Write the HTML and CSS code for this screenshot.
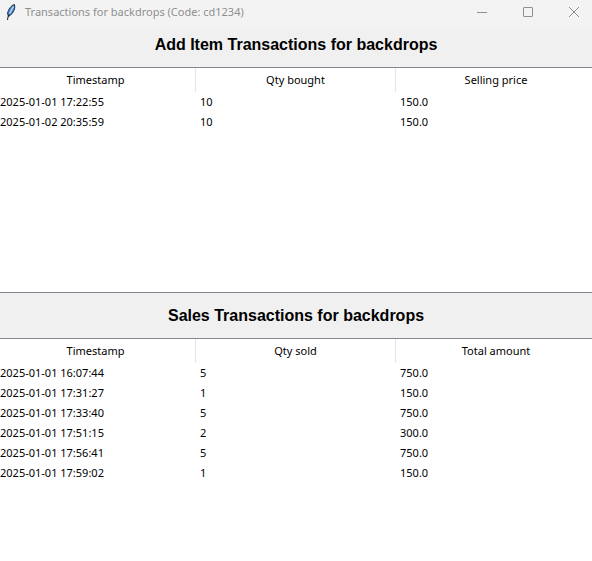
FILE: index.html
```
<!DOCTYPE html>
<html lang="en">
<head>
<meta charset="utf-8">
<title>Transactions for backdrops (Code: cd1234)</title>
<link rel="stylesheet" href="styles.css">
</head>
<body>
<header class="titlebar">
  <svg class="feather" viewBox="0 0 12 18" aria-hidden="true">
    <path d="M9.500 1.500C6 2.500 3.500 6 2.500 10.500L3.500 13.500C7 11.500 9 8.500 9.800 4.500Z" fill="#3f7fd0" stroke="#2a303c" stroke-width="1"/>
    <path d="M8.500 3.500L4.500 10.500" stroke="#a9cdf5" stroke-width="1.600"/>
    <path d="M4 11.500L3 14L2.500 17" fill="none" stroke="#151b26" stroke-width="1"/>
  </svg>
  <span class="caption">Transactions for backdrops (Code: cd1234)</span>
  <div class="controls">
    <button type="button" class="control" aria-label="Minimize"><svg viewBox="0 0 12 12"><path d="M1 6.5H11"/></svg></button>
    <button type="button" class="control" aria-label="Maximize"><svg viewBox="0 0 12 12"><rect x="1.5" y="1.5" width="9" height="9" rx="0.5"/></svg></button>
    <button type="button" class="control" aria-label="Close"><svg viewBox="0 0 12 12"><path d="M1 1L11 11M11 1L1 11"/></svg></button>
  </div>
</header>
<main class="content">
  <h2 class="heading heading-first" id="added">Add Item Transactions for backdrops</h2>
  <section class="tree">
    <table aria-labelledby="added">
      <colgroup><col class="col-time"><col class="col-qty"><col></colgroup>
      <thead><tr><th>Timestamp</th><th>Qty bought</th><th>Selling price</th></tr></thead>
      <tbody>
        <tr><td>2025-01-01 17:22:55</td><td>10</td><td>150.0</td></tr>
        <tr><td>2025-01-02 20:35:59</td><td>10</td><td>150.0</td></tr>
      </tbody>
    </table>
  </section>
  <h2 class="heading" id="sales">Sales Transactions for backdrops</h2>
  <section class="tree">
    <table aria-labelledby="sales">
      <colgroup><col class="col-time"><col class="col-qty"><col></colgroup>
      <thead><tr><th>Timestamp</th><th>Qty sold</th><th>Total amount</th></tr></thead>
      <tbody>
        <tr><td>2025-01-01 16:07:44</td><td>5</td><td>750.0</td></tr>
        <tr><td>2025-01-01 17:31:27</td><td>1</td><td>150.0</td></tr>
        <tr><td>2025-01-01 17:33:40</td><td>5</td><td>750.0</td></tr>
        <tr><td>2025-01-01 17:51:15</td><td>2</td><td>300.0</td></tr>
        <tr><td>2025-01-01 17:56:41</td><td>5</td><td>750.0</td></tr>
        <tr><td>2025-01-01 17:59:02</td><td>1</td><td>150.0</td></tr>
      </tbody>
    </table>
  </section>
</main>
</body>
</html>
```
FILE: styles.css
```
* {
  box-sizing: border-box;
}

body {
  margin: 0;
  background: #f0f0f0;
  color: #000;
  font-family: "Noto Sans", "Open Sans", sans-serif;
  font-size: 11px;
  overflow: hidden;
}

.titlebar {
  display: flex;
  align-items: center;
  height: 27px;
  padding: 0 0 4px 5px;
  background: #f3f3f3;
  color: #8f8f8f;
}

.feather {
  width: 12px;
  height: 18px;
  margin-right: 8px;
}

.caption {
  flex: 1;
  line-height: 20px;
  white-space: nowrap;
}

.controls {
  display: flex;
  margin-right: -5px;
}

.control {
  display: flex;
  align-items: center;
  justify-content: center;
  width: 46px;
  height: 22px;
  padding: 0;
  border: 0;
  background: none;
  color: inherit;
}

.control svg {
  width: 12px;
  height: 12px;
  fill: none;
  stroke: currentColor;
}

.heading {
  margin: 0;
  padding: 13px 0 12px;
  font: bold 16px/20px "Liberation Sans", Arial, sans-serif;
  text-align: center;
}

.heading-first {
  padding-top: 8px;
}

.tree {
  min-height: 226px;
  border: solid #828790;
  border-width: 1px 0;
  background: #fff;
}

table {
  width: 100%;
  table-layout: fixed;
  border-collapse: separate;
  border-spacing: 0;
}

.col-time {
  width: 196px;
}

.col-qty {
  width: 200px;
}

th {
  height: 24px;
  padding: 0 0 0 4px;
  border-right: 1px solid #e5e5e5;
  font-weight: 400;
  line-height: 24px;
}

th:first-child {
  padding: 0 4px 0 0;
}

th:nth-child(2) {
  padding: 0;
}

th:last-child {
  border-right: 0;
}

td {
  height: 20px;
  padding: 0 0 0 4px;
  line-height: 20px;
}

td:first-child {
  padding-left: 0;
}
```
